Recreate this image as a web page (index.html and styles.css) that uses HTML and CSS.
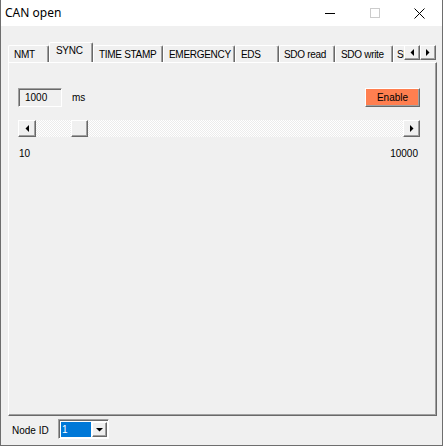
FILE: index.html
```html
<!DOCTYPE html>
<html>
<head>
<meta charset="utf-8">
<title>CAN open</title>
<link rel="stylesheet" href="styles.css">
</head>
<body>
<div class="window">
  <div class="titlebar">
    <span class="title">CAN open</span>
    <div class="controls">
      <span class="ctl"><svg width="10" height="10" viewBox="0 0 10 10"><path d="M0 5.5H10" stroke="#000" stroke-width="1"/></svg></span>
      <span class="ctl"><svg width="10" height="10" viewBox="0 0 10 10"><rect x="0.5" y="0.5" width="9" height="9" fill="none" stroke="#cccccc" stroke-width="1"/></svg></span>
      <span class="ctl"><svg width="11" height="11" viewBox="0 0 11 11"><path d="M0.5 0.5L10.5 10.5M10.5 0.5L0.5 10.5" stroke="#000" stroke-width="1"/></svg></span>
    </div>
  </div>
  <div class="client">
    <div class="tabrow">
      <div class="tabstrip">
        <div class="tab t-nmt">NMT</div>
        <div class="tab sel t-sync">SYNC</div>
        <div class="tab t-ts">TIME STAMP</div>
        <div class="tab t-em">EMERGENCY</div>
        <div class="tab t-eds">EDS</div>
        <div class="tab t-sr">SDO read</div>
        <div class="tab t-sw">SDO write</div>
        <div class="tab t-more">SDO</div>
      </div>
      <div class="spin">
        <span class="btn3d spinbtn"><svg width="4" height="7" viewBox="0 0 4 7"><path d="M4 0V7L0.5 3.5Z" fill="#000"/></svg></span>
        <span class="btn3d spinbtn"><svg width="4" height="7" viewBox="0 0 4 7"><path d="M0 0V7L3.5 3.5Z" fill="#000"/></svg></span>
      </div>
    </div>
    <div class="panel">
      <div class="row top">
        <div class="edit">1000</div>
        <span class="unit">ms</span>
        <div class="btn3d enable">Enable</div>
      </div>
      <div class="scrollbar">
        <span class="btn3d sbtn"><svg width="4" height="7" viewBox="0 0 4 7"><path d="M4 0V7L0.5 3.5Z" fill="#000"/></svg></span>
        <div class="track">
          <span class="btn3d thumb"></span>
        </div>
        <span class="btn3d sbtn"><svg width="4" height="7" viewBox="0 0 4 7"><path d="M0 0V7L3.5 3.5Z" fill="#000"/></svg></span>
      </div>
      <div class="row labels">
        <span>10</span>
        <span>10000</span>
      </div>
    </div>
    <div class="footer">
      <span class="nodelabel">Node ID</span>
      <div class="combo">
        <span class="combosel">1</span>
        <span class="btn3d combobtn"><svg width="7" height="4" viewBox="0 0 7 4"><path d="M0 0H7L3.5 3.5Z" fill="#000"/></svg></span>
      </div>
    </div>
  </div>
</div>
</body>
</html>
```
FILE: styles.css
```css
* { box-sizing: border-box; }
html, body { margin: 0; padding: 0; background: #ffffff; }
body {
  font-family: "Liberation Sans", Arial, sans-serif;
  font-size: 10px;
  color: #000;
}
.window {
  width: 443px;
  height: 446px;
  border: 1px solid #6e6e6e;
  border-top: 0;
  display: flex;
  flex-direction: column;
  background: #f0f0f0;
}
.titlebar {
  height: 26px;
  flex: none;
  background: #ffffff;
  display: flex;
  align-items: center;
}
.title {
  font-family: "Noto Sans", "Open Sans", sans-serif;
  font-size: 12px;
  margin-left: 4px;
  padding-bottom: 1px;
}
.controls { margin-left: auto; display: flex; }
.ctl {
  width: 45px;
  height: 26px;
  display: flex;
  align-items: center;
  justify-content: center;
}
.client {
  flex: 1;
  display: flex;
  flex-direction: column;
  padding: 16px 5px 0 7px;
}
.tabrow {
  height: 20px;
  flex: none;
  display: flex;
  position: relative;
  z-index: 1;
}
.tabstrip {
  flex: 1;
  display: flex;
  align-items: flex-end;
  overflow: hidden;
}
.tab {
  flex: none;
  height: 17px;
  border-top: 1px solid #ffffff;
  border-left: 1px solid #ffffff;
  border-right: 1px solid #696969;
  box-shadow: inset -1px 0 #a0a0a0;
  border-radius: 2px 2px 0 0;
  text-align: left;
  padding-left: 5px;
  letter-spacing: -0.3px;
  line-height: 15px;
  padding-top: 1px;
  white-space: nowrap;
}
.tab.sel {
  height: 21px;
  margin-bottom: -1px;
  line-height: 15px;
  padding-top: 0;
  padding-left: 6px;
  background: #f0f0f0;
}
.t-nmt { width: 41px; }
.t-sync { width: 44px; }
.t-ts { width: 70px; }
.t-em { width: 72px; }
.t-eds { width: 44px; }
.t-sr { width: 56px; padding-left: 4px; }
.t-sw { width: 58px; }
.t-more { width: 40px; padding-left: 3px; }
.spin {
  flex: none;
  display: flex;
  align-self: flex-start;
  margin-top: 3px;
  padding-right: 1px;
}
.btn3d {
  background: #f0f0f0;
  border: 1px solid;
  border-color: #ffffff #696969 #696969 #ffffff;
  box-shadow: inset -1px -1px #a0a0a0;
  display: flex;
  align-items: center;
  justify-content: center;
}
.spinbtn { width: 16px; height: 15px; }
.panel {
  flex: 1;
  border-top: 1px solid #ffffff;
  border-left: 1px solid #ffffff;
  border-right: 1px solid #696969;
  border-bottom: 1px solid #696969;
  box-shadow: inset -1px -1px #a0a0a0;
  padding: 25px 15px 0 9px;
  display: flex;
  flex-direction: column;
}
.row { display: flex; align-items: center; }
.edit {
  width: 44px;
  height: 19px;
  border: 1px solid;
  border-color: #a0a0a0 #ffffff #ffffff #a0a0a0;
  box-shadow: inset 1px 1px #696969;
  padding: 2px 0 0 6px;
  line-height: 14px;
}
.unit { margin-left: 10px; padding-bottom: 1px; }
.enable {
  margin-left: auto;
  margin-right: 1px;
  width: 55px;
  height: 19px;
  background: #ff7f50;
  padding-bottom: 1px;
}
.scrollbar {
  margin-top: 13px;
  width: 402px;
  height: 17px;
  display: flex;
}
.sbtn { width: 18px; height: 17px; flex: none; }
.sbtn:last-child { width: 17px; }
.track {
  flex: 1;
  background: repeating-conic-gradient(#ffffff 0 25%, #ececec 0 50%) 0 0 / 2px 2px;
  padding-left: 35px;
}
.thumb { width: 17px; height: 17px; }
.labels {
  margin-top: 10px;
  justify-content: space-between;
  width: 400px;
  padding-left: 1px;
  line-height: 13px;
}
.footer {
  height: 29px;
  flex: none;
  display: flex;
  align-items: flex-start;
  padding: 3px 0 0 4px;
}
.nodelabel { margin-top: 6px; width: 46px; }
.combo {
  width: 51px;
  height: 20px;
  border: 1px solid;
  border-color: #a0a0a0 #ffffff #ffffff #a0a0a0;
  box-shadow: inset 1px 1px #696969;
  padding: 2px 1px 1px 2px;
  display: flex;
  background: #ffffff;
}
.combosel {
  flex: 1;
  background: #0078d7;
  color: #ffffff;
  line-height: 15px;
  padding-left: 1px;
}
.combobtn { width: 15px; height: 15px; flex: none; margin-left: 1px; }
```
